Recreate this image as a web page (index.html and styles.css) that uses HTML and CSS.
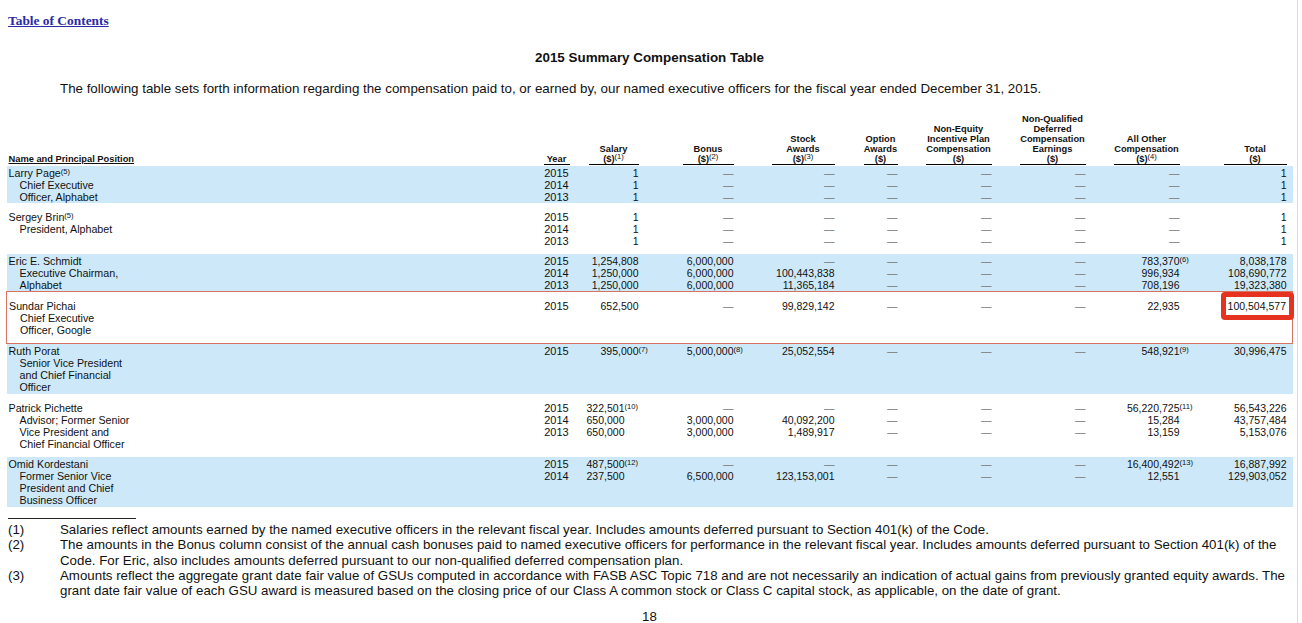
FILE: index.html
```html
<!DOCTYPE html>
<html lang="en">
<head>
<meta charset="utf-8">
<title>2015 Summary Compensation Table</title>
<link rel="stylesheet" href="styles.css">
</head>
<body>
<div class="page">
  <a class="toc" href="#">Table of Contents</a>
  <h1 class="title">2015 Summary Compensation Table</h1>
  <p class="intro">The following table sets forth information regarding the compensation paid to, or earned by, our named executive officers for the fiscal year ended December 31, 2015.</p>

  <table class="comp">
    <colgroup>
      <col class="c-name"><col class="c-year"><col class="c-sal"><col class="c-bon"><col class="c-stk"><col class="c-opt"><col class="c-neq"><col class="c-nqd"><col class="c-oth"><col class="c-tot">
    </colgroup>
    <thead>
      <tr>
        <th class="th-name"><span class="u">Name and Principal Position</span></th>
        <th class="th-year"><div class="hd hd-year">Year</div></th>
        <th><div class="hd w50">Salary<br>($)<sup class="fn">(1)</sup></div></th>
        <th><div class="hd w51">Bonus<br>($)<sup class="fn">(2)</sup></div></th>
        <th><div class="hd w63">Stock<br>Awards<br>($)<sup class="fn">(3)</sup></div></th>
        <th><div class="hd w34">Option<br>Awards<br>($)</div></th>
        <th><div class="hd w66">Non-Equity<br>Incentive Plan<br>Compensation<br>($)</div></th>
        <th><div class="hd w66">Non-Qualified<br>Deferred<br>Compensation<br>Earnings<br>($)</div></th>
        <th><div class="hd w66">All Other<br>Compensation<br>($)<sup class="fn">(4)</sup></div></th>
        <th class="tot"><div class="hd w63">Total<br>($)</div></th>
      </tr>
    </thead>

    <tbody class="grp blue">
      <tr><td class="nm">Larry Page<sup class="fn">(5)</sup></td><td class="yr">2015</td><td>1</td><td class="d">—</td><td class="d">—</td><td class="d">—</td><td class="d">—</td><td class="d">—</td><td class="d">—</td><td class="tot">1</td></tr>
      <tr><td class="nm sub">Chief Executive</td><td class="yr">2014</td><td>1</td><td class="d">—</td><td class="d">—</td><td class="d">—</td><td class="d">—</td><td class="d">—</td><td class="d">—</td><td class="tot">1</td></tr>
      <tr><td class="nm sub">Officer, Alphabet</td><td class="yr">2013</td><td>1</td><td class="d">—</td><td class="d">—</td><td class="d">—</td><td class="d">—</td><td class="d">—</td><td class="d">—</td><td class="tot">1</td></tr>
    </tbody>

    <tbody class="grp white">
      <tr><td class="nm">Sergey Brin<sup class="fn">(5)</sup></td><td class="yr">2015</td><td>1</td><td class="d">—</td><td class="d">—</td><td class="d">—</td><td class="d">—</td><td class="d">—</td><td class="d">—</td><td class="tot">1</td></tr>
      <tr><td class="nm sub">President, Alphabet</td><td class="yr">2014</td><td>1</td><td class="d">—</td><td class="d">—</td><td class="d">—</td><td class="d">—</td><td class="d">—</td><td class="d">—</td><td class="tot">1</td></tr>
      <tr><td class="nm sub"></td><td class="yr">2013</td><td>1</td><td class="d">—</td><td class="d">—</td><td class="d">—</td><td class="d">—</td><td class="d">—</td><td class="d">—</td><td class="tot">1</td></tr>
    </tbody>

    <tbody class="grp blue">
      <tr><td class="nm">Eric E. Schmidt</td><td class="yr">2015</td><td>1,254,808</td><td>6,000,000</td><td class="d">—</td><td class="d">—</td><td class="d">—</td><td class="d">—</td><td>783,370<span class="hang"><sup class="fn">(6)</sup></span></td><td class="tot">8,038,178</td></tr>
      <tr><td class="nm sub">Executive Chairman,</td><td class="yr">2014</td><td>1,250,000</td><td>6,000,000</td><td>100,443,838</td><td class="d">—</td><td class="d">—</td><td class="d">—</td><td>996,934</td><td class="tot">108,690,772</td></tr>
      <tr><td class="nm sub">Alphabet</td><td class="yr">2013</td><td>1,250,000</td><td>6,000,000</td><td>11,365,184</td><td class="d">—</td><td class="d">—</td><td class="d">—</td><td>708,196</td><td class="tot">19,323,380</td></tr>
    </tbody>

    <tbody class="grp white hl">
      <tr><td class="nm">Sundar Pichai</td><td class="yr">2015</td><td>652,500</td><td class="d">—</td><td>99,829,142</td><td class="d">—</td><td class="d">—</td><td class="d">—</td><td>22,935</td><td class="tot"><span class="callout">100,504,577</span></td></tr>
      <tr><td class="nm sub">Chief Executive</td><td class="yr"></td><td></td><td></td><td></td><td></td><td></td><td></td><td></td><td class="tot"></td></tr>
      <tr><td class="nm sub">Officer, Google</td><td class="yr"></td><td></td><td></td><td></td><td></td><td></td><td></td><td></td><td class="tot"></td></tr>
    </tbody>

    <tbody class="grp blue">
      <tr><td class="nm">Ruth Porat</td><td class="yr">2015</td><td>395,000<span class="hang"><sup class="fn">(7)</sup></span></td><td>5,000,000<span class="hang"><sup class="fn">(8)</sup></span></td><td>25,052,554</td><td class="d">—</td><td class="d">—</td><td class="d">—</td><td>548,921<span class="hang"><sup class="fn">(9)</sup></span></td><td class="tot">30,996,475</td></tr>
      <tr><td class="nm sub">Senior Vice President</td><td class="yr"></td><td></td><td></td><td></td><td></td><td></td><td></td><td></td><td class="tot"></td></tr>
      <tr><td class="nm sub">and Chief Financial</td><td class="yr"></td><td></td><td></td><td></td><td></td><td></td><td></td><td></td><td class="tot"></td></tr>
      <tr><td class="nm sub">Officer</td><td class="yr"></td><td></td><td></td><td></td><td></td><td></td><td></td><td></td><td class="tot"></td></tr>
    </tbody>

    <tbody class="grp white">
      <tr><td class="nm">Patrick Pichette</td><td class="yr">2015</td><td class="sal-l">322,501<span class="hang"><sup class="fn">(10)</sup></span></td><td class="d">—</td><td class="d">—</td><td class="d">—</td><td class="d">—</td><td class="d">—</td><td>56,220,725<span class="hang"><sup class="fn">(11)</sup></span></td><td class="tot">56,543,226</td></tr>
      <tr><td class="nm sub">Advisor; Former Senior</td><td class="yr">2014</td><td class="sal-l">650,000</td><td>3,000,000</td><td>40,092,200</td><td class="d">—</td><td class="d">—</td><td class="d">—</td><td>15,284</td><td class="tot">43,757,484</td></tr>
      <tr><td class="nm sub">Vice President and</td><td class="yr">2013</td><td class="sal-l">650,000</td><td>3,000,000</td><td>1,489,917</td><td class="d">—</td><td class="d">—</td><td class="d">—</td><td>13,159</td><td class="tot">5,153,076</td></tr>
      <tr><td class="nm sub">Chief Financial Officer</td><td class="yr"></td><td></td><td></td><td></td><td></td><td></td><td></td><td></td><td class="tot"></td></tr>
    </tbody>

    <tbody class="grp blue">
      <tr><td class="nm">Omid Kordestani</td><td class="yr">2015</td><td class="sal-l">487,500<span class="hang"><sup class="fn">(12)</sup></span></td><td class="d">—</td><td class="d">—</td><td class="d">—</td><td class="d">—</td><td class="d">—</td><td>16,400,492<span class="hang"><sup class="fn">(13)</sup></span></td><td class="tot">16,887,992</td></tr>
      <tr><td class="nm sub">Former Senior Vice</td><td class="yr">2014</td><td class="sal-l">237,500</td><td>6,500,000</td><td>123,153,001</td><td class="d">—</td><td class="d">—</td><td class="d">—</td><td>12,551</td><td class="tot">129,903,052</td></tr>
      <tr><td class="nm sub">President and Chief</td><td class="yr"></td><td></td><td></td><td></td><td></td><td></td><td></td><td></td><td class="tot"></td></tr>
      <tr><td class="nm sub">Business Officer</td><td class="yr"></td><td></td><td></td><td></td><td></td><td></td><td></td><td></td><td class="tot"></td></tr>
    </tbody>
  </table>

  <div class="notes">
    <div class="rule"></div>
    <ol class="fnotes">
      <li><span class="num">(1)</span><span class="txt">Salaries reflect amounts earned by the named executive officers in the relevant fiscal year. Includes amounts deferred pursuant to Section 401(k) of the Code.</span></li>
      <li><span class="num">(2)</span><span class="txt">The amounts in the Bonus column consist of the annual cash bonuses paid to named executive officers for performance in the relevant fiscal year. Includes amounts deferred pursuant to Section 401(k) of the<br>Code. For Eric, also includes amounts deferred pursuant to our non-qualified deferred compensation plan.</span></li>
      <li><span class="num">(3)</span><span class="txt">Amounts reflect the aggregate grant date fair value of GSUs computed in accordance with FASB ASC Topic 718 and are not necessarily an indication of actual gains from previously granted equity awards. The<br>grant date fair value of each GSU award is measured based on the closing price of our Class A common stock or Class C capital stock, as applicable, on the date of grant.</span></li>
    </ol>
  </div>

  <div class="pagenum">18</div>
</div>
</body>
</html>
```
FILE: styles.css
```css
html, body {
  margin: 0;
  padding: 0;
  background: #ffffff;
}

body {
  font-family: "Liberation Sans", Arial, Helvetica, sans-serif;
  color: #111;
}

.page {
  width: 1298px;
  min-height: 623px;
  box-sizing: border-box;
  border-right: 1px solid #dcdcdc;
  padding-top: 13px;
}

.toc {
  display: block;
  width: max-content;
  margin-left: 8px;
  font-family: "Liberation Serif", "Times New Roman", serif;
  font-weight: bold;
  font-size: 13.4px;
  line-height: 15px;
  color: #2a2aa6;
  text-decoration: underline;
}

.title {
  margin: 22px 0 0;
  text-align: center;
  font-size: 13.4px;
  line-height: 15px;
  font-weight: bold;
  padding-left: 2px;
}

.intro {
  margin: 16px 0 0 60px;
  font-size: 13.33px;
  line-height: 15px;
  white-space: nowrap;
}

/* ---------- table ---------- */
.comp {
  margin: 18px 0 0 6px;
  width: 1286px;
  table-layout: fixed;
  border-collapse: collapse;
  border-spacing: 0;
}

.c-name { width: 534px; }
.c-year { width: 32px; }
.c-sal  { width: 66px; }
.c-bon  { width: 95px; }
.c-stk  { width: 101px; }
.c-opt  { width: 63px; }
.c-neq  { width: 94px; }
.c-nqd  { width: 94px; }
.c-oth  { width: 94px; }
.c-tot  { width: 113px; }

.comp th {
  padding: 0 0 1px;
  vertical-align: bottom;
  font-size: 9.3px;
  line-height: 10px;
  font-weight: bold;
  white-space: nowrap;
}

.comp th.th-name {
  text-align: left;
  padding-left: 2px;
  padding-bottom: 2px;
}

.u {
  text-decoration: underline;
  text-underline-offset: 1px;
}

.hd {
  margin-left: auto;
  text-align: center;
  border-bottom: 1px solid #000;
}

.hd-year {
  width: 26px;
  margin: 0 auto;
}

.w34 { width: 34px; }
.w50 { width: 50px; }
.w51 { width: 51px; }
.w63 { width: 63px; }
.w66 { width: 66px; }

.comp th.tot,
.comp td.tot {
  padding-right: 6px;
}

.comp td {
  padding: 0;
  font-size: 10.5px;
  line-height: 12px;
  height: 12px;
  text-align: right;
  white-space: nowrap;
  vertical-align: middle;
}

.comp td.nm {
  text-align: left;
  padding-left: 2px;
  font-size: 10.7px;
}

.comp td.nm.sub {
  padding-left: 13px;
}

.comp td.yr {
  text-align: center;
  font-size: 11px;
}

.comp td.d {
  color: #777;
}

.comp td.sal-l {
  padding-right: 14px;
}

.fn {
  font-size: 7.6px;
  font-weight: normal;
  line-height: 0;
  vertical-align: 3px;
}

.hang {
  display: inline-block;
  width: 0;
  white-space: nowrap;
  text-align: left;
}

/* group bands */
.grp.blue {
  background: #cde9f9;
}

.grp.blue tr:first-child td { padding-top: 1px; }
.grp.blue tr:nth-child(4):last-child td { padding-bottom: 1px; }

.grp.white tr:first-child td { padding-top: 8px; }
.grp.white tr:last-child td { padding-bottom: 7px; }

.grp.hl {
  border: 1px solid #d8735f;
}

.callout {
  display: inline-block;
  line-height: 12px;
  background: #fff;
  border: 5px solid #e5331f;
  border-radius: 4px;
  padding: 3px 3px 3px 2px;
  margin: -8px -8px -8px -7px;
  position: relative;
}

/* ---------- footnotes ---------- */
.notes {
  margin-top: 11px;
}

.rule {
  width: 128px;
  height: 1px;
  margin-left: 8px;
  background: #222;
}

.fnotes {
  list-style: none;
  margin: 3px 0 0;
  padding: 0;
  font-size: 13.3px;
  line-height: 15.25px;
}

.fnotes li {
  display: flex;
}

.fnotes .num {
  width: 52px;
  flex: none;
  padding-left: 8px;
}

.fnotes .txt {
  white-space: nowrap;
}

.pagenum {
  margin-top: 13px;
  text-align: center;
  font-size: 13.3px;
  line-height: 12px;
  padding-left: 2px;
}
```
